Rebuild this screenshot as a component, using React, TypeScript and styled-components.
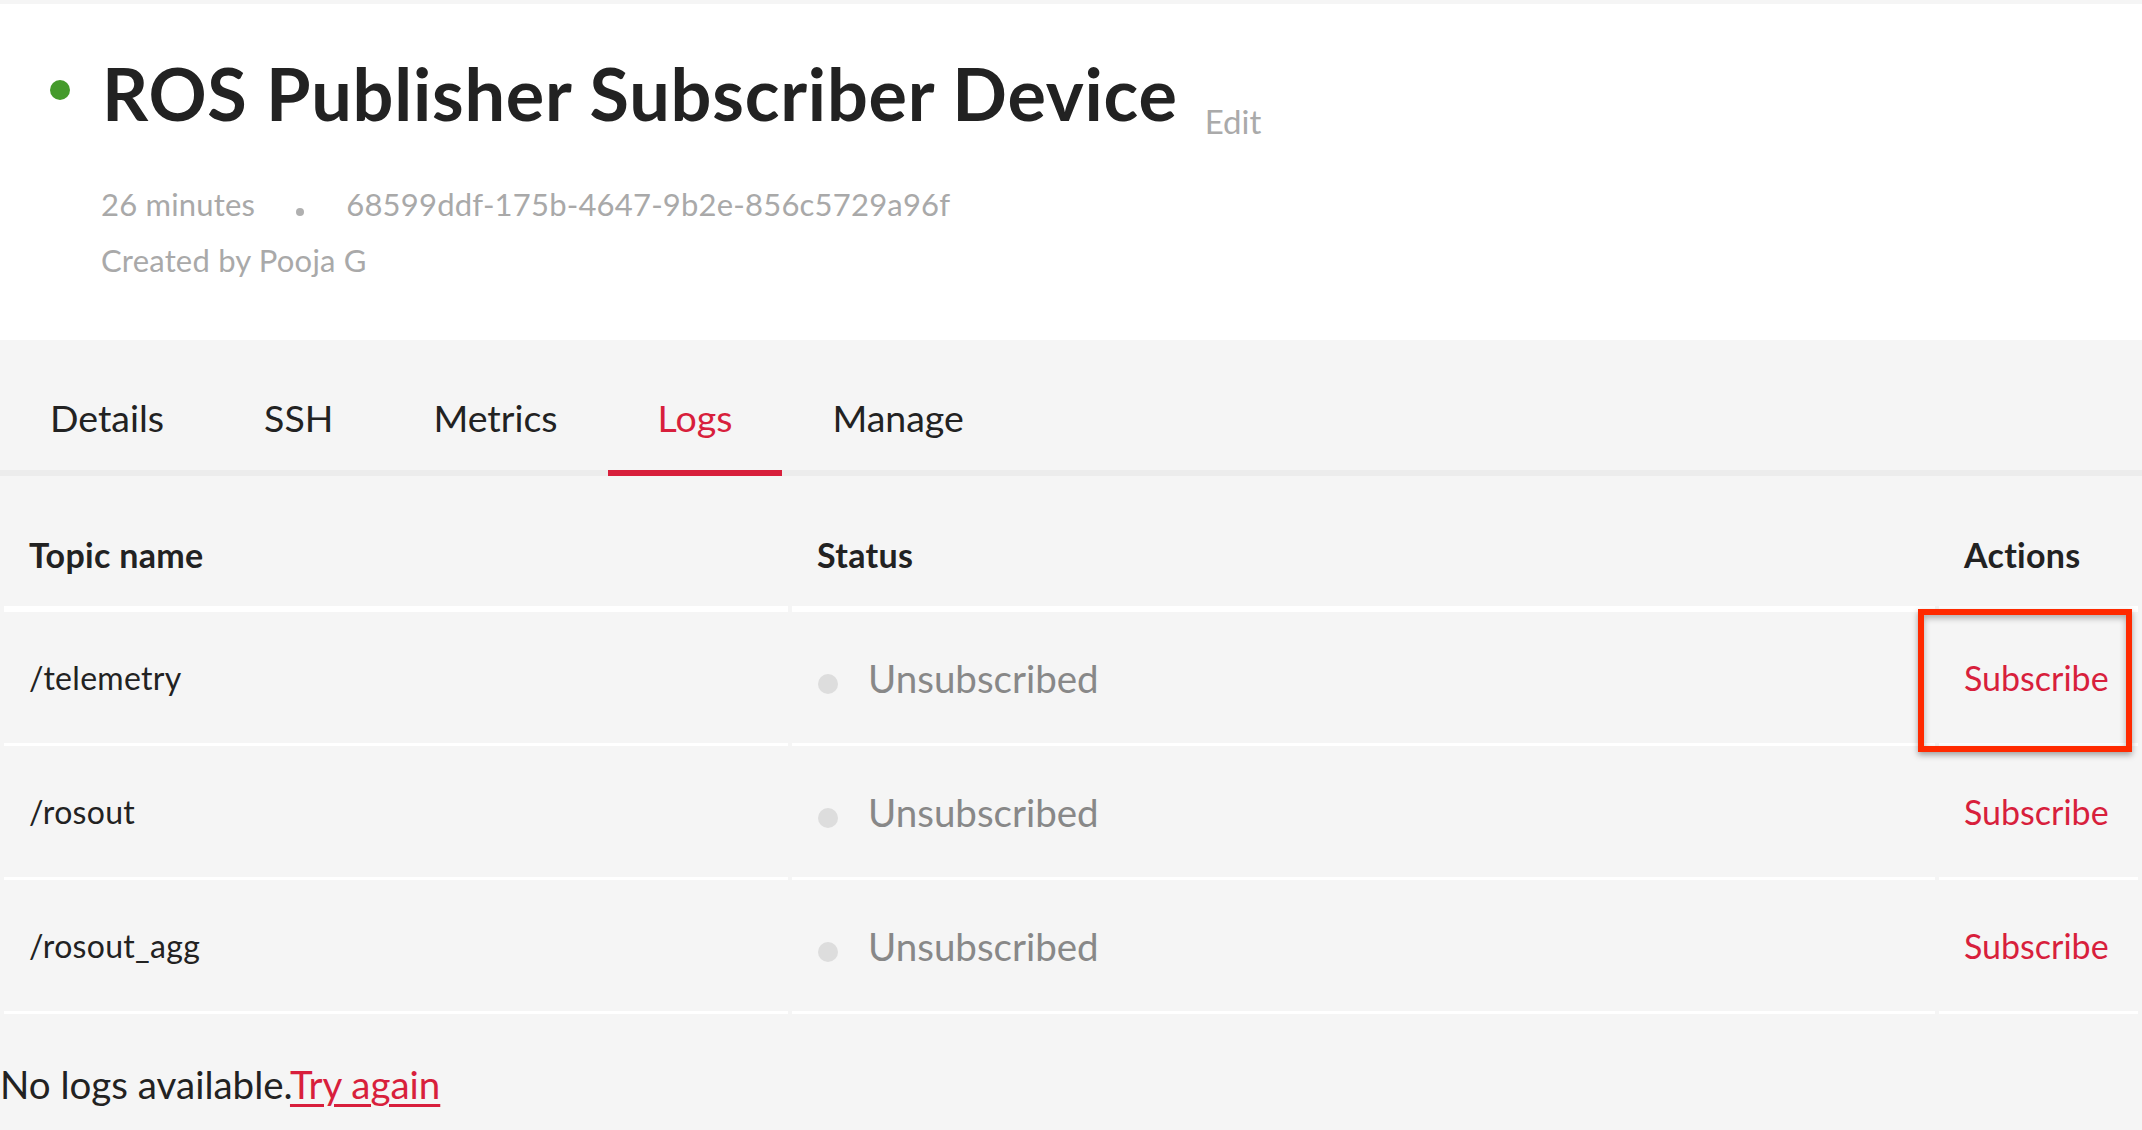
import React from "react";
import styled, { createGlobalStyle } from "styled-components";

const GlobalStyle = createGlobalStyle`
  *, *::before, *::after { box-sizing: border-box; }
  html, body { margin: 0; padding: 0; }
  body {
    background: #f5f5f5;
    font-family: Lato, "Open Sans", "Liberation Sans", sans-serif;
    color: #222;
  }
`;

const Page = styled.div`
  padding-top: 4px;
  width: 2142px;
  min-height: 1130px;
`;

const Header = styled.header`
  background: #fff;
  height: 336px;
  padding-top: 53px;
`;

const TitleRow = styled.div`
  display: flex;
  align-items: flex-end;
`;

const OnlineDot = styled.span`
  align-self: flex-start;
  width: 20px;
  height: 20px;
  border-radius: 50%;
  background: #449a2b;
  margin: 23px 32px 0 50px;
`;

const Title = styled.h1`
  margin: 0;
  font-size: 72px;
  line-height: 72px;
  font-weight: 700;
  color: #222;
  letter-spacing: 0.8px;
`;

const EditLink = styled.span`
  font-size: 33px;
  line-height: 33px;
  color: #aaa;
  margin: 0 0 -9px 27px;
`;

const Meta = styled.div`
  margin-top: 47px;
  padding-left: 101px;
  font-size: 31px;
  line-height: 56px;
  letter-spacing: 0.2px;
  color: #a9a9a9;
`;

const MetaLine = styled.div`
  display: flex;
  align-items: baseline;
`;

const MetaSep = styled.span`
  display: inline-block;
  width: 8px;
  height: 8px;
  border-radius: 50%;
  background: #b0b0b0;
  margin: 0 42px 7px 41px;
`;

const TabBar = styled.nav`
  display: flex;
  height: 136px;
  border-bottom: 6px solid #ececec;
`;

const Tab = styled.div<{ $active?: boolean }>`
  padding: 59px 50px 0;
  font-size: 37.5px;
  line-height: 38px;
  color: ${(p) => (p.$active ? "#d81f3c" : "#222")};
  border-bottom: 6px solid ${(p) => (p.$active ? "#d81f3c" : "transparent")};
  margin-bottom: -6px;
  height: 136px;
`;

const Table = styled.table`
  width: 100%;
  table-layout: fixed;
  border-collapse: separate;
  border-spacing: 4px 0;
`;

const Th = styled.th<{ $w: number }>`
  width: ${(p) => p.$w}px;
  text-align: left;
  font-size: 34px;
  line-height: 34px;
  font-weight: 700;
  letter-spacing: 0.3px;
  color: #222;
  padding: 62px 25px 34px;
  border-bottom: 6px solid #fff;
`;

const Td = styled.td`
  height: 134px;
  padding: 0 25px;
  border-bottom: 3px solid #fff;
  vertical-align: middle;
  position: relative;
`;

const TopicName = styled.span`
  font-size: 32px;
  letter-spacing: 0.3px;
  color: #222;
`;

const Status = styled.div`
  display: flex;
  align-items: center;
`;

const StatusDot = styled.span`
  width: 20px;
  height: 20px;
  border-radius: 50%;
  background: #dddddd;
  margin: 12px 30px 0 1px;
  flex: none;
`;

const StatusText = styled.span`
  font-size: 38.5px;
  color: #888;
`;

const ActionLink = styled.a`
  font-size: 34px;
  color: #d81f3c;
  text-decoration: none;
  cursor: pointer;
`;

const Highlight = styled.div`
  position: absolute;
  left: -21px;
  top: -3px;
  width: 214px;
  height: 143px;
  border: 6px solid #ff2a00;
  box-shadow: 0 3px 6px rgba(0, 0, 0, 0.35), inset 0 3px 6px rgba(0, 0, 0, 0.3);
  pointer-events: none;
`;

const EmptyNote = styled.p`
  margin: 47px 0 0;
  font-size: 38.5px;
  line-height: 1.2;
  color: #222;
`;

const RetryLink = styled.a`
  color: #d81f3c;
  text-decoration: underline;
  text-decoration-thickness: 3px;
  text-underline-offset: 5px;
  cursor: pointer;
`;

const topics = ["/telemetry", "/rosout", "/rosout_agg"];
const tabs = ["Details", "SSH", "Metrics", "Logs", "Manage"];

export default function App() {
  return (
    <Page>
      <GlobalStyle />
      <Header>
        <TitleRow>
          <OnlineDot />
          <Title>ROS Publisher Subscriber Device</Title>
          <EditLink>Edit</EditLink>
        </TitleRow>
        <Meta>
          <MetaLine>
            <span>26 minutes</span>
            <MetaSep />
            <span>68599ddf-175b-4647-9b2e-856c5729a96f</span>
          </MetaLine>
          <MetaLine>Created by Pooja G</MetaLine>
        </Meta>
      </Header>
      <TabBar>
        {tabs.map((t) => (
          <Tab key={t} $active={t === "Logs"}>
            {t}
          </Tab>
        ))}
      </TabBar>
      <Table>
        <thead>
          <tr>
            <Th $w={784}>Topic name</Th>
            <Th $w={1143}>Status</Th>
            <Th $w={199}>Actions</Th>
          </tr>
        </thead>
        <tbody>
          {topics.map((t, i) => (
            <tr key={t}>
              <Td>
                <TopicName>{t}</TopicName>
              </Td>
              <Td>
                <Status>
                  <StatusDot />
                  <StatusText>Unsubscribed</StatusText>
                </Status>
              </Td>
              <Td>
                <ActionLink>Subscribe</ActionLink>
                {i === 0 && <Highlight />}
              </Td>
            </tr>
          ))}
        </tbody>
      </Table>
      <EmptyNote>
        No logs available.<RetryLink>Try again</RetryLink>
      </EmptyNote>
    </Page>
  );
}
